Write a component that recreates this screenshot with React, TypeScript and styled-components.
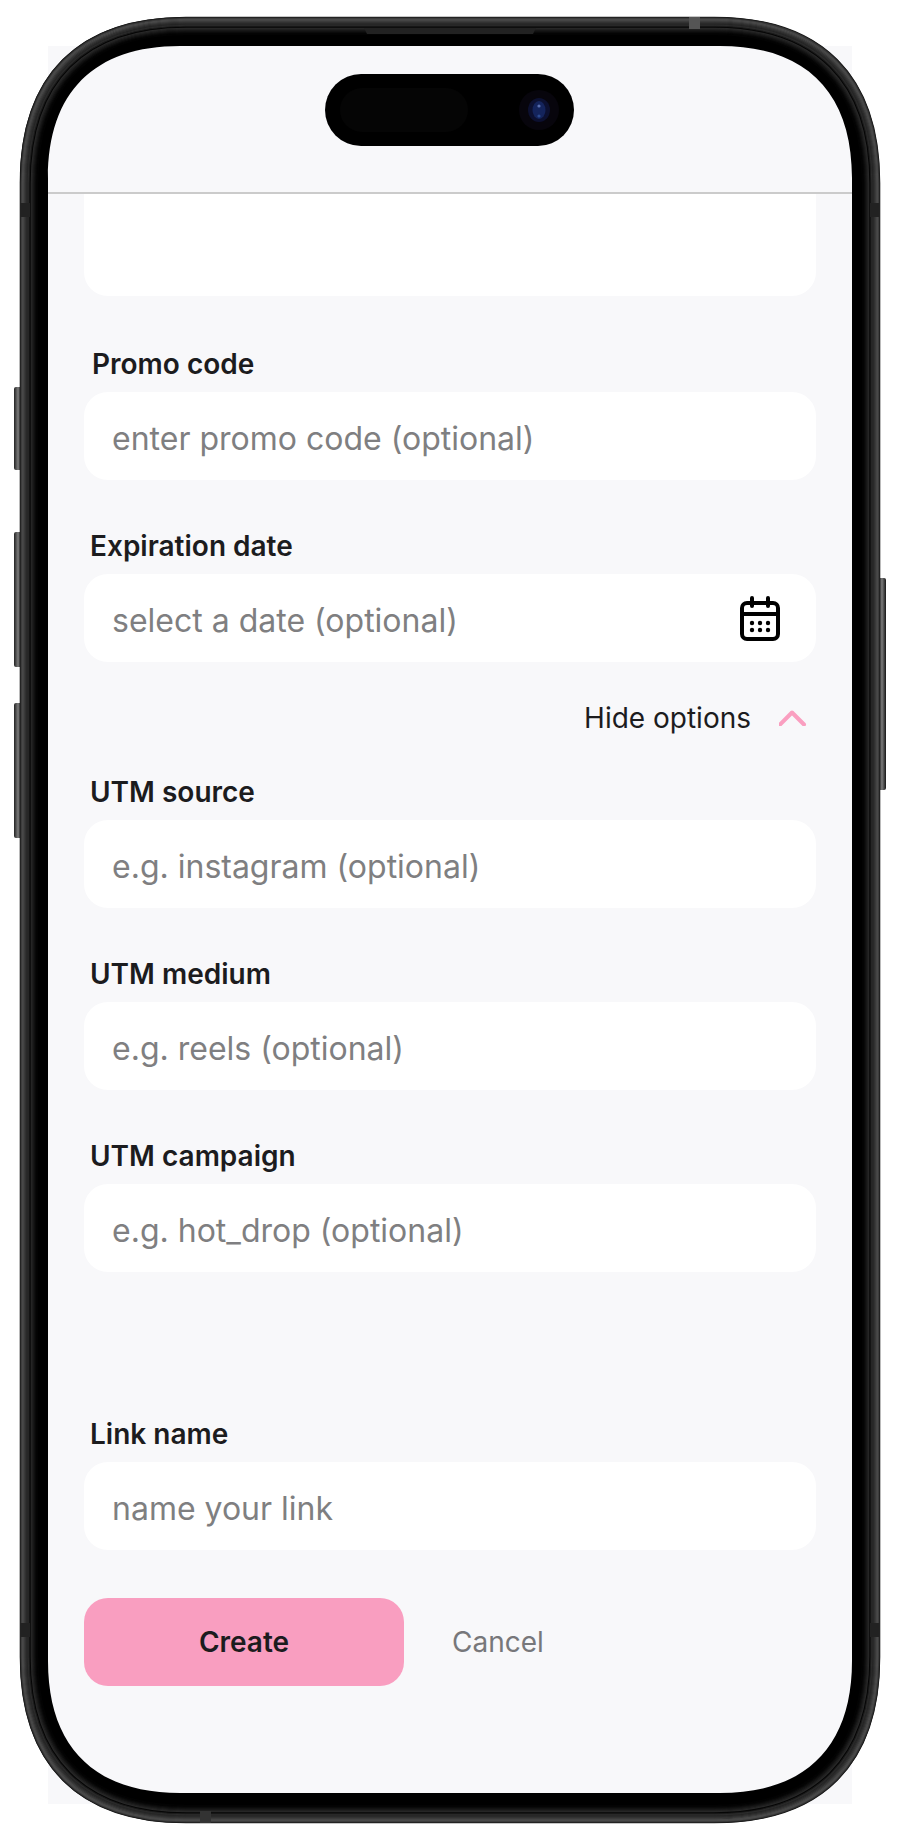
import React from "react";
import styled, { createGlobalStyle } from "styled-components";

const Global = createGlobalStyle`
  html, body { margin: 0; padding: 0; background: #fff; }
  body { font-family: Inter, "Liberation Sans", sans-serif; }
  * { box-sizing: border-box; }
`;

const Stage = styled.div`
  position: relative;
  width: 900px;
  height: 1840px;
  padding: 46px 48px 36px;
  overflow: hidden;
  background: #fff;
`;

const Screen = styled.main`
  display: flex;
  flex-direction: column;
  height: 100%;
  background: #f8f8fa;
`;

const Header = styled.header`
  flex: none;
  height: 148px;
  border-bottom: 2px solid #cbcbcb;
`;

const Form = styled.form`
  display: flex;
  flex-direction: column;
  padding: 0 36px;
`;

const ClippedCard = styled.div`
  height: 102px;
  margin-bottom: 52px;
  background: #fff;
  border-radius: 0 0 24px 24px;
`;

const Field = styled.div<{ $gap?: number }>`
  display: flex;
  flex-direction: column;
  margin-bottom: ${(p) => p.$gap ?? 50}px;
`;

const Label = styled.label<{ $indent?: number }>`
  height: 32px;
  margin-bottom: 12px;
  padding-left: ${(p) => p.$indent ?? 6}px;
  font-size: 28px;
  line-height: 32px;
  font-weight: 600;
  color: #1c1c1e;
`;

const InputBox = styled.div`
  display: flex;
  align-items: center;
  justify-content: space-between;
  height: 88px;
  padding: 0 36px 0 28px;
  background: #fff;
  border-radius: 24px;
`;

const Input = styled.input`
  flex: 1;
  min-width: 0;
  border: 0;
  outline: 0;
  padding: 4px 0 0;
  background: transparent;
  font-family: inherit;
  font-size: 32px;
  color: #1c1c1e;
  &::placeholder { color: #7f7f81; opacity: 1; }
`;

const OptionsToggle = styled.div`
  display: flex;
  align-items: center;
  justify-content: flex-end;
  gap: 28px;
  height: 56px;
  margin: -22px 0 30px;
  padding-right: 9px;
  font-size: 28px;
  color: #1c1c1e;
`;

const Actions = styled.div`
  display: flex;
  align-items: center;
  gap: 48px;
`;

const CreateButton = styled.button`
  width: 320px;
  height: 88px;
  border: 0;
  border-radius: 24px;
  background: #f99ec0;
  font-family: inherit;
  font-size: 28px;
  font-weight: 600;
  color: #1c1c1e;
`;

const CancelButton = styled.button`
  border: 0;
  padding: 0;
  background: transparent;
  font-family: inherit;
  font-size: 28px;
  color: #77777a;
`;

const FrameArt = styled.svg`
  position: absolute;
  left: 0;
  top: 0;
  pointer-events: none;
`;

const roundedPath = (x: number, y: number, w: number, h: number, r: number) => {
  const k = r * 0.35;
  const x2 = x + w;
  const y2 = y + h;
  return `M${x + r} ${y}H${x2 - r}C${x2 - k} ${y} ${x2} ${y + k} ${x2} ${y + r}V${y2 - r}C${x2} ${y2 - k} ${x2 - k} ${y2} ${x2 - r} ${y2}H${x + r}C${x + k} ${y2} ${x} ${y2 - k} ${x} ${y2 - r}V${y + r}C${x} ${y + k} ${x + k} ${y} ${x + r} ${y}Z`;
};

// Metal band of the phone, outermost ring first: one colour per pixel of inset.
const bandColours = [
  "#1c1c1c", "#383838", "#4a4a4a", "#484848", "#3e3e3e", "#343434",
  "#2c2c2c", "#262626", "#2c2c2c", "#1c1c1c", "#060606", "#282828",
  "#222", "#1a1a1a", "#131313", "#0c0c0c", "#060606", "#030303",
];

const Phone = () => (
  <FrameArt width="900" height="1840" viewBox="0 0 900 1840">
    <defs>
      <linearGradient id="btn" x1="0" x2="1" y1="0" y2="0">
        <stop offset="0" stopColor="#222" />
        <stop offset="0.5" stopColor="#7a7a7a" />
        <stop offset="1" stopColor="#161616" />
      </linearGradient>
    </defs>
    <rect x="14" y="387" width="8" height="83" rx="2" fill="url(#btn)" />
    <rect x="14" y="532" width="8" height="135" rx="2" fill="url(#btn)" />
    <rect x="14" y="703" width="8" height="135" rx="2" fill="url(#btn)" />
    <rect x="878" y="578" width="8" height="212" rx="2" fill="url(#btn)" />
    <path
      fillRule="evenodd"
      fill="#000"
      d={roundedPath(20, 17, 860, 1806, 166) + roundedPath(48, 46, 804, 1747, 132)}
    />
    {bandColours.map((colour, i) => (
      <path
        key={i}
        d={roundedPath(20.5 + i, 17.5 + i, 859 - 2 * i, 1805 - 2 * i, 165.5 - i)}
        fill="none"
        stroke={colour}
        strokeWidth="1.6"
      />
    ))}
    <rect x="689" y="17" width="11" height="12" fill="#555" />
    <rect x="200" y="1811" width="11" height="12" fill="#333" />
    <rect x="20" y="203" width="10" height="14" fill="#222" />
    <rect x="870" y="203" width="10" height="14" fill="#222" />
    <rect x="20" y="1623" width="10" height="14" fill="#222" />
    <rect x="870" y="1623" width="10" height="14" fill="#222" />
    <path d="M364 28H536L533 34H367Z" fill="#222" />
    <rect x="325" y="74" width="249" height="72" rx="36" fill="#000" />
    <rect x="340" y="88" width="128" height="44" rx="22" fill="#050505" />
    <circle cx="539" cy="110" r="20" fill="#07050c" />
    <ellipse cx="539" cy="110" rx="11" ry="12" fill="#0c1030" />
    <ellipse cx="539" cy="110" rx="6.5" ry="9" fill="#14245c" />
    <circle cx="539" cy="106" r="1.6" fill="#5a6fb0" />
    <circle cx="539" cy="116" r="1.6" fill="#2c4a90" />
  </FrameArt>
);

const CalendarIcon = () => (
  <svg width="40" height="45" viewBox="0 0 40 45" fill="none">
    <rect x="2" y="7" width="36" height="36" rx="5" stroke="#000" strokeWidth="4" />
    <path d="M2 18H38" stroke="#000" strokeWidth="4" />
    <path d="M12 2V10M28 2V10" stroke="#000" strokeWidth="4" strokeLinecap="round" />
    {[12, 20, 28].map((x) =>
      [27, 34].map((y) => <circle key={`${x}-${y}`} cx={x} cy={y} r="2.2" fill="#000" />)
    )}
  </svg>
);

const Chevron = () => (
  <svg width="28" height="16" viewBox="0 0 28 16" fill="none">
    <path d="M1 14.5L13 2.5L25 14.5" stroke="#fa9fc0" strokeWidth="4" strokeLinecap="round" strokeLinejoin="round" />
  </svg>
);

const TextField = ({
  label,
  placeholder,
  indent,
  gap,
  children,
}: {
  label: string;
  placeholder: string;
  indent?: number;
  gap?: number;
  children?: React.ReactNode;
}) => (
  <Field $gap={gap}>
    <Label $indent={indent}>{label}</Label>
    <InputBox>
      <Input placeholder={placeholder} readOnly />
      {children}
    </InputBox>
  </Field>
);

export default function App() {
  return (
    <>
      <Global />
      <Stage>
        <Screen>
          <Header />
          <Form onSubmit={(e) => e.preventDefault()}>
            <ClippedCard />
            <TextField label="Promo code" placeholder="enter promo code (optional)" indent={8} />
            <TextField label="Expiration date" placeholder="select a date (optional)">
              <CalendarIcon />
            </TextField>
            <OptionsToggle>
              <span>Hide options</span>
              <Chevron />
            </OptionsToggle>
            <TextField label="UTM source" placeholder="e.g. instagram (optional)" />
            <TextField label="UTM medium" placeholder="e.g. reels (optional)" />
            <TextField label="UTM campaign" placeholder="e.g. hot_drop (optional)" gap={146} />
            <TextField label="Link name" placeholder="name your link" gap={48} />
            <Actions>
              <CreateButton type="button">Create</CreateButton>
              <CancelButton type="button">Cancel</CancelButton>
            </Actions>
          </Form>
        </Screen>
        <Phone />
      </Stage>
    </>
  );
}
